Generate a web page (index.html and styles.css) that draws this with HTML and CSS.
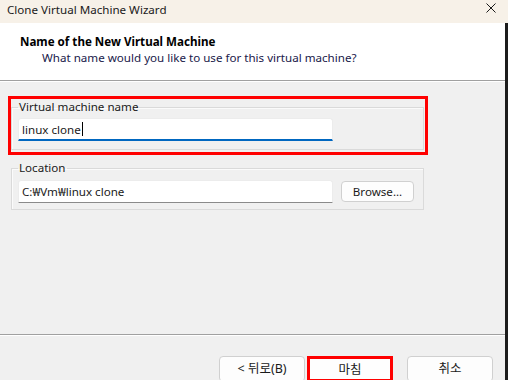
FILE: index.html
```html
<!DOCTYPE html>
<html lang="en">
  <head>
    <title>Clone Virtual Machine Wizard</title>
    <link rel="stylesheet" href="styles.css">
  </head>
  <body>
    <div class="window">
      <header class="titlebar">
        <span class="title">Clone Virtual Machine Wizard</span>
        <svg class="close" width="10" height="10" viewBox="0 0 10 10">
          <path d="M0.5 0.5 L9.5 9.5 M9.5 0.5 L0.5 9.5" stroke="#1a1a1a" stroke-width="1" fill="none"/>
        </svg>
      </header>

      <div class="frame">
        <section class="banner">
          <h1>Name of the New Virtual Machine</h1>
          <p>What name would you like to use for this virtual machine?</p>
        </section>

        <section class="page">
          <div class="mark">
            <fieldset class="group">
              <legend>Virtual machine name</legend>
              <div class="textbox focused">
                <span>linux clone</span><span class="caret"></span>
              </div>
            </fieldset>
          </div>

          <fieldset class="group location">
            <legend>Location</legend>
            <div class="row">
              <div class="textbox"><span>C:₩Vm₩linux clone</span></div>
              <button class="btn browse">Browse...</button>
            </div>
          </fieldset>
        </section>

        <footer class="buttons">
          <button class="btn">&lt; 뒤로(B)</button>
          <button class="btn finish">마침</button>
          <button class="btn cancel">취소</button>
        </footer>
      </div>
    </div>
  </body>
</html>
```

FILE: styles.css
```css
:root {
  --titlebar-bg: #f7f1e8;
  --face: #f0f0f0;
  --text: #1a1a1a;
  --subtitle: #20204a;
  --group-border: #dadada;
  --accent: #0067c0;
  --mark: #ff0000;
}

html, body {
  margin: 0;
  height: 380px;
  overflow: hidden;
  background: var(--face);
}

body {
  font-family: "Noto Sans", "Noto Sans CJK KR", sans-serif;
  font-size: 11.6px;
  color: var(--text);
}

.window {
  width: 508px;
  height: 380px;
  display: flex;
  flex-direction: column;
}

.titlebar {
  height: 23px;
  flex: none;
  background: var(--titlebar-bg);
  display: flex;
  align-items: center;
  justify-content: space-between;
  padding: 0 12px 0 7px;
  box-sizing: border-box;
}
  .titlebar .title {
    line-height: 16px;
    margin-top: -4px;
  }
  .titlebar .close {
    margin-top: -7px;
  }

.frame {
  flex: 1;
  width: 505px;
  border-right: 3px solid #1c1c1c;
  display: flex;
  flex-direction: column;
}

.banner {
  height: 58px;
  flex: none;
  background: #fff;
  border-bottom: 1px solid #a0a0a0;
  box-shadow: 0 1px 0 #fff;
  padding: 11px 0 0 20px;
  box-sizing: border-box;
}
  .banner h1 {
    margin: 0;
    font-size: 11.6px;
    font-weight: 700;
    line-height: 16px;
    color: #000;
  }
  .banner p {
    margin: 0 0 0 22px;
    line-height: 15px;
    color: var(--subtitle);
  }

.page {
  flex: none;
  height: 253px;
  margin-top: 1px;
  padding: 14px 0 0 8px;
  box-sizing: border-box;
  border-bottom: 1px solid #a0a0a0;
  box-shadow: 0 1px 0 #fff;
}

.mark {
  width: 420px;
  height: 59px;
  box-sizing: border-box;
  border: 3px solid var(--mark);
}

.group {
  margin: 0;
  width: 413px;
  box-sizing: border-box;
  border: 1px solid var(--group-border);
  box-shadow: inset 1px 1px 0 #fbfbfb;
  padding: 3px 6px 8px 6px;
}
  .group legend {
    padding: 0 1px;
    line-height: 16px;
  }
  .group.location {
    margin: 5px 0 0 3px;
    padding-top: 1px;
    padding-bottom: 6px;
  }

.textbox {
  height: 23px;
  width: 315px;
  box-sizing: border-box;
  background: #fff;
  border: 1px solid #ececec;
  border-bottom: 1px solid #8a8a8a;
  border-radius: 3px 3px 0 0;
  padding: 0 3px;
  display: flex;
  align-items: center;
  white-space: nowrap;
}
  .textbox.focused {
    border-bottom: 2px solid var(--accent);
  }
  .caret {
    width: 1px;
    height: 14px;
    background: #000;
    margin-left: 1px;
  }

.row {
  display: flex;
  align-items: flex-start;
  gap: 8px;
  margin-top: 3px;
}

.btn {
  font: inherit;
  color: var(--text);
  background: #fdfdfd;
  border: 1px solid #d0d0d0;
  border-radius: 4px;
  width: 86px;
  height: 26px;
  padding: 0 0 3px 0;
  box-sizing: border-box;
}
  .btn.browse {
    width: 73px;
    height: 21px;
    padding: 0;
    margin-top: 1px;
  }

.buttons {
  display: flex;
  padding: 21px 0 0 219px;
  gap: 2px;
}
  .buttons .btn {
    font-size: 12.5px;
  }
  .buttons .finish {
    border: 3px solid var(--mark);
    border-radius: 0;
    background: #fefefe;
  }
  .buttons .cancel {
    margin-left: 12px;
  }
```
